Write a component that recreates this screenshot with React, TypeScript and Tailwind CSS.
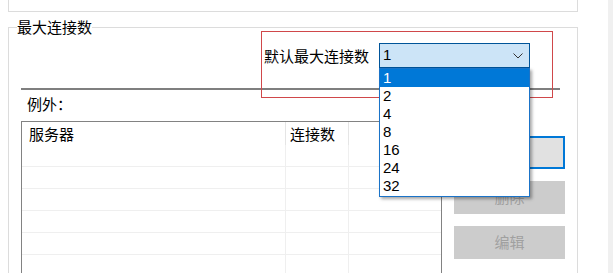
import React from "react";

const cjk = { fontFamily: '"Noto Sans CJK SC", "Microsoft YaHei", sans-serif' };
const latin = { fontFamily: '"Liberation Sans", "Noto Sans", sans-serif' };

const options = ["1", "2", "4", "8", "16", "24", "32"];
const rows = [0, 1, 2, 3, 4, 5];

function Chevron() {
  return (
    <svg width="10" height="6" viewBox="0 0 10 6" className="shrink-0">
      <path d="M0.5 0.5 L5 5 L9.5 0.5" fill="none" stroke="#333" strokeWidth="1" />
    </svg>
  );
}

function SideButton({ label, focused }: { label: string; focused?: boolean }) {
  return (
    <div
      className={
        focused
          ? "h-[33px] w-[111px] border-2 border-[#0078d7] bg-[#e1e1e1] flex items-center justify-center text-[15px] text-black"
          : "h-[33px] w-[111px] border border-[#cccccc] bg-[#cccccc] flex items-center justify-center text-[15px] text-[#a0a0a0]"
      }
      style={cjk}
    >
      {label}
    </div>
  );
}

export default function App() {
  return (
    <div className="relative w-[613px] h-[273px] overflow-hidden bg-white flex">
      <div className="w-[608px] pl-[8px]">
        {/* upper panel (cut off) */}
        <div className="h-[12px] w-[570px] border-l border-r border-b border-[#dcdcdc]" />

        {/* group box */}
        <fieldset className="mt-[5px] w-[570px] h-[300px] border border-[#dcdcdc]">
          <legend className="ml-[8px] text-[15px] leading-[20px] text-black" style={cjk}>
            最大连接数
          </legend>

          <div className="mt-[6px] pl-[255px] flex items-center gap-[10px] h-[25px]">
            <span className="w-[105px] text-[15px] leading-[25px] whitespace-nowrap text-black" style={cjk}>
              默认最大连接数
            </span>
            <div className="w-[151px] h-[25px] border border-[#005499] bg-[#cce4f7] flex items-center justify-between pl-[3px] pr-[6px]">
              <span className="text-[15px] text-black" style={latin}>1</span>
              <Chevron />
            </div>
          </div>

          <div className="mt-[20px] ml-[12px] w-[539px] h-[2px] bg-[#7f7f7f]" />

          <div className="mt-[4px] ml-[18px] h-[20px] text-[15px] leading-[20px] text-black" style={cjk}>
            例外：
          </div>

          <div className="mt-[7px] ml-[12px] flex gap-[12px]">
            {/* exceptions table */}
            <div className="w-[421px] h-[200px] border-l border-t border-r border-[#828282]">
              <div className="flex h-[23px] text-[15px] text-black" style={cjk}>
                <div className="w-[264px] pl-[7px] pt-[3px] leading-[18px] border-r border-[#e5e5e5]">服务器</div>
                <div className="w-[63px] pl-[4px] pt-[3px] leading-[18px] border-r border-[#e5e5e5]">连接数</div>
                <div className="flex-1" />
              </div>
              {rows.map((r) => (
                <div key={r} className="flex h-[22px] border-b border-[#efefef]">
                  <div className="w-[264px] border-r border-[#efefef]" />
                  <div className="w-[63px] border-r border-[#efefef]" />
                  <div className="flex-1" />
                </div>
              ))}
            </div>

            {/* side buttons */}
            <div className="mt-[15px] flex flex-col gap-[12px]">
              <SideButton label="添加" focused />
              <SideButton label="删除" />
              <SideButton label="编辑" />
            </div>
          </div>
        </fieldset>
      </div>
      <div className="flex-1 bg-[#f0f0f0]" />

      {/* annotation highlight */}
      <div className="absolute left-[261px] top-[31px] w-[292px] h-[67px] border border-[#d0484a]" />

      {/* open dropdown list */}
      <div className="absolute left-[379px] top-[68px] w-[151px] border border-[#1a73c8] bg-white pb-[1px] shadow-[2px_2px_3px_rgba(0,0,0,0.35)]">
        {options.map((o, i) => (
          <div
            key={o}
            className={
              i === 0
                ? "h-[18px] pl-[3px] leading-[18px] text-[15px] bg-[#0078d7] text-white"
                : "h-[18px] pl-[3px] leading-[18px] text-[15px] text-black"
            }
            style={latin}
          >
            {o}
          </div>
        ))}
      </div>
    </div>
  );
}
